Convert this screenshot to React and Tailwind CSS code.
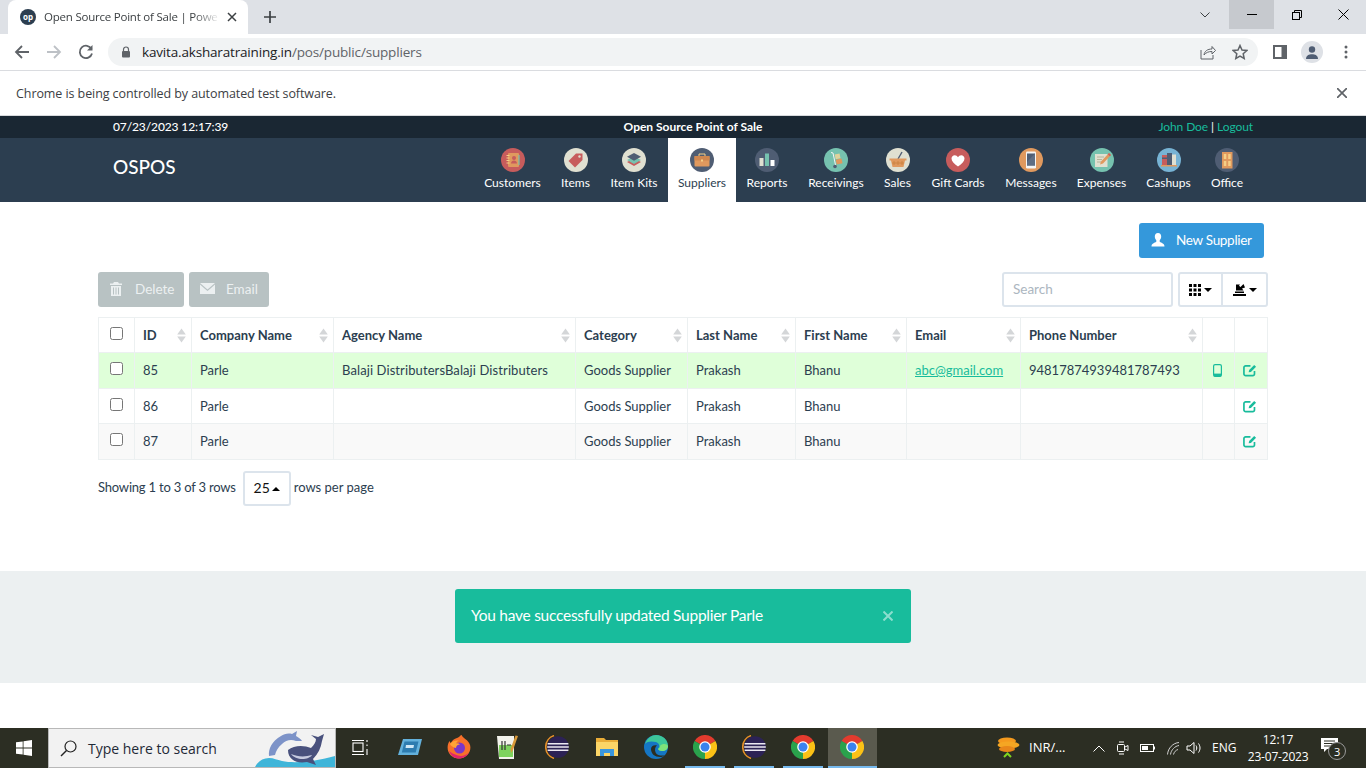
import React from "react";

const Chrome = ({ s = 24 }) => (
  <svg width={s} height={s} viewBox="0 0 24 24">
    <path d="M12 12L1.600 6A12 12 0 0 1 22.400 6Z" fill="#e33b2e" />
    <path d="M12 12L22.400 6A12 12 0 0 1 12 24Z" fill="#fbc116" />
    <path d="M12 12L12 24A12 12 0 0 1 1.600 6Z" fill="#2aa24c" />
    <circle cx="12" cy="12" r="5.800" fill="#fff" />
    <circle cx="12" cy="12" r="4.500" fill="#3b82ee" />
  </svg>
);
const Eclipse = () => (
  <svg width="24" height="24" viewBox="0 0 24 24">
    <path d="M9 0.600A12 12 0 0 0 9 23.400" fill="none" stroke="#e8902a" strokeWidth="1.600" />
    <circle cx="13" cy="12" r="10.800" fill="#2c2255" />
    <path d="M2.600 8.800h20.800M2.200 12h21.600M2.600 15.200h20.800" stroke="#ece9f2" strokeWidth="1.400" />
  </svg>
);
const Firefox = () => (
  <svg width="24" height="24" viewBox="0 0 24 24">
    <path d="M12 23.500C5 23.500 .6 18.500.6 12.500c0-2.400.7-4.600 1.900-6.400.3 1 .8 1.600 1.400 2 1-2.400 3-4 5.400-4.800 2-.7 4-2 5-3.800 1 2.800 3.200 3.500 5.600 5.800 2.300 2.200 3.500 4.600 3.500 7.200 0 6-4.900 11-11.400 11z" fill="#f7702a" />
    <path d="M2 16c2 5 6 7.500 10 7.500 4 0 8-2.500 10-6-3 3-7 4-11 3-4-1-7-3-9-4.500z" fill="#e0226e" />
    <circle cx="12.500" cy="13" r="5.500" fill="#7a35c9" />
    <path d="M3 9c2-3 6-4 9-3.500-1.500.5-2.500 1.500-3 3 1.500-.5 3 0 4 1-2 0-4 1-4 3.500-3-.5-5-2-6-4z" fill="#ffa436" />
  </svg>
);
const Edge = () => (
  <svg width="24" height="24" viewBox="0 0 24 24">
    <circle cx="12" cy="12" r="12" fill="#1576c4" />
    <path d="M1 9C3 3 8 0 12 0c7 0 12 5 12 11 0 3-2.500 5-6 5-2.500 0-4-1-4-2.500 2-1 2-5-2-6.500C8 6 3 6 1 9z" fill="#3dc79a" />
    <path d="M7 14c0 5 4 8 9 8 2 0 3.500-.6 5-1.800-2 .8-8 .8-9.500-3C10.500 15 11 12 13 10.500c-3-1-6 .5-6 3.500z" fill="#2b2e24" />
    <path d="M24 11c0 3-2.500 5-6 5-2 0-3.500-.7-4-2 1.600-.7 2.300-2 2.200-3.500C20 8 23 9 24 11z" fill="#7ee27a" />
  </svg>
);
const TaskIcon = ({ children, underline, active }) => (
  <div className={`w-[49.200px] h-[40px] flex justify-center ${active ? "bg-[#5a5a4e]" : ""}`}>
    <div className={`h-[40px] flex items-center justify-center border-b-[2px] ${active ? "w-full" : "w-[40px]"} ${underline ? "border-[#76b9ed]" : "border-transparent"}`}>
      {children}
    </div>
  </div>
);
const SortCaret = () => (
  <svg width="9" height="15" viewBox="0 0 9 15" className="shrink-0 -mr-[3px]">
    <path d="M4.500 .5L8.800 6.500H.2z" fill="#d4d6d8" />
    <path d="M4.500 14.500L.2 8.500h8.600z" fill="#d4d6d8" />
  </svg>
);
const EditIcon = () => (
  <svg width="15" height="13" viewBox="0 0 15 13" fill="none">
    <path d="M8 1.500H3A1.800 1.800 0 0 0 1 3.300v6.900A1.800 1.800 0 0 0 3 12h7.500a1.800 1.800 0 0 0 1.800-1.800V7" stroke="#18bc9c" strokeWidth="1.800" />
    <path d="M6 8.500l.6-2.500L12 .6 14 2.500 8.500 8z" fill="#18bc9c" />
  </svg>
);
const PhoneIcon = () => (
  <svg width="9" height="13" viewBox="0 0 9 13">
    <rect x=".6" y=".6" width="7.800" height="11.800" rx="1.500" fill="none" stroke="#18bc9c" strokeWidth="1.200" />
    <rect x="1" y="9.600" width="7" height="2.800" fill="#18bc9c" />
  </svg>
);

const navIcons = {
  Customers: (
    <>
      <circle cx="12" cy="12" r="12" fill="#c75c5c" />
      <rect x="7" y="5" width="11" height="14" rx="1" fill="#e0995e" />
      <path d="M5.500 7.500h3M5.500 10h3M5.500 12.500h3M5.500 15h3" stroke="#f5cf87" strokeWidth="1" />
      <circle cx="13" cy="10" r="2" fill="#c75c5c" />
      <path d="M10 15.500c0-2 1.500-3 3-3s3 1 3 3z" fill="#c75c5c" />
      <path d="M18 7v10" stroke="#76c2af" strokeWidth="1.200" />
    </>
  ),
  Items: (
    <>
      <circle cx="12" cy="12" r="12" fill="#e0e0d1" />
      <path d="M12 5.500h6.500V12L11 19.500 4.500 13z" fill="#c75c5c" />
      <circle cx="15.500" cy="8.500" r="1.200" fill="#e0e0d1" />
    </>
  ),
  "Item Kits": (
    <>
      <circle cx="12" cy="12" r="12" fill="#e0e0d1" />
      <path d="M12 10.500l7 3.500-7 4-7-4z" fill="#c75c5c" />
      <path d="M12 8.500l7 3.500-7 4-7-4z" fill="#76c2af" />
      <path d="M12 5l7 3.800-7 4-7-4z" fill="#4f5d73" />
    </>
  ),
  Suppliers: (
    <>
      <circle cx="12" cy="12" r="12" fill="#4f5d73" />
      <rect x="4.500" y="8" width="15" height="10.500" rx="1" fill="#e0995e" />
      <rect x="4.500" y="8" width="15" height="4.500" fill="#d0874f" />
      <path d="M9 8V6h6v2" fill="none" stroke="#f5cf87" strokeWidth="1" />
      <rect x="11" y="11.500" width="2" height="2" fill="#f5cf87" />
    </>
  ),
  Reports: (
    <>
      <circle cx="12" cy="12" r="12" fill="#4f5d73" />
      <rect x="4.500" y="10" width="4" height="8" fill="#e0e0d1" />
      <rect x="10" y="5.500" width="4" height="12.500" fill="#76c2af" />
      <rect x="15.500" y="12" width="4" height="6" fill="#fff" />
    </>
  ),
  Receivings: (
    <>
      <circle cx="12" cy="12" r="12" fill="#76c2af" />
      <path d="M7 4.500l2 .5 2.500 12" fill="none" stroke="#f5f5f5" strokeWidth="1" />
      <rect x="11" y="6" width="5" height="5" transform="rotate(-12 13 8)" fill="#e0d29b" />
      <rect x="12" y="11" width="6" height="5" transform="rotate(-12 15 13)" fill="#e0995e" />
      <circle cx="11" cy="18.500" r="1.800" fill="#4f5d73" />
    </>
  ),
  Sales: (
    <>
      <circle cx="12" cy="12" r="12" fill="#e0e0d1" />
      <path d="M12 11L16 4" stroke="#4f5d73" strokeWidth="1.400" />
      <path d="M3.500 10.500h17v2h-1.500l-1.500 6.500h-11L5 12.500H3.500z" fill="#e0995e" />
      <path d="M8 13v4M12 13v4M16 13v4M6 15h12" stroke="#c9803f" strokeWidth=".8" />
    </>
  ),
  "Gift Cards": (
    <>
      <circle cx="12" cy="12" r="12" fill="#c75c5c" />
      <path d="M12 18.500C8 15.500 5.500 13.500 5.500 10.500c0-2 1.500-3.300 3.200-3.300 1.400 0 2.600.8 3.300 2 .7-1.200 1.900-2 3.300-2 1.700 0 3.200 1.300 3.200 3.300 0 3-2.500 5-6.500 8z" fill="#fff" />
    </>
  ),
  Messages: (
    <>
      <circle cx="12" cy="12" r="12" fill="#e0995e" />
      <rect x="7" y="3.500" width="10" height="17" rx="1.200" fill="#f5f5f5" />
      <rect x="8" y="5.500" width="8" height="12" fill="#4f5d73" />
      <path d="M8 17.500V14l8-8.500v12z" fill="#5f6e84" />
    </>
  ),
  Expenses: (
    <>
      <circle cx="12" cy="12" r="12" fill="#76c2af" />
      <rect x="5" y="6" width="12.500" height="13" fill="#e0e0d1" />
      <path d="M7 9h7M7 11.500h5M7 14h4" stroke="#a9a98f" strokeWidth=".8" />
      <path d="M19 5l2 2-8 8.500-3 1 1-3z" fill="#e0995e" />
      <path d="M19 5l2 2-1.200 1.200-2-2z" fill="#c75c5c" />
    </>
  ),
  Cashups: (
    <>
      <circle cx="12" cy="12" r="12" fill="#77b3d4" />
      <rect x="5" y="7" width="5" height="10" fill="#c75c5c" />
      <rect x="5" y="9.500" width="5" height="1.500" fill="#4f5d73" />
      <rect x="10" y="5" width="5" height="12" fill="#4f5d73" />
      <rect x="15" y="6.500" width="4" height="10.500" fill="#e0e0d1" />
      <rect x="4" y="17" width="16" height="1.500" fill="#e0995e" />
    </>
  ),
  Office: (
    <>
      <circle cx="12" cy="12" r="12" fill="#4f5d73" />
      <rect x="7" y="4" width="10.500" height="16.500" fill="#e0995e" />
      <rect x="8.800" y="6" width="2.500" height="5" fill="#f5cf87" />
      <rect x="13.200" y="6" width="2.500" height="5" fill="#f5cf87" />
      <rect x="8.800" y="13" width="2.500" height="5" fill="#f5cf87" />
      <rect x="13.200" y="13" width="2.500" height="5" fill="#f5cf87" />
    </>
  ),
};

const navItems = [
  ["Customers", "w-[77px]"],
  ["Items", "w-[49px]"],
  ["Item Kits", "w-[68px]"],
  ["Suppliers", "w-[68px]"],
  ["Reports", "w-[62px]"],
  ["Receivings", "w-[76px]"],
  ["Sales", "w-[47px]"],
  ["Gift Cards", "w-[74px]"],
  ["Messages", "w-[72px]"],
  ["Expenses", "w-[69px]"],
  ["Cashups", "w-[65px]"],
  ["Office", "w-[52px]"],
];

const headers = [
  ["ID", "w-[57px]"],
  ["Company Name", "w-[142px]"],
  ["Agency Name", "w-[242px]"],
  ["Category", "w-[112px]"],
  ["Last Name", "w-[108px]"],
  ["First Name", "w-[111px]"],
  ["Email", "w-[114px]"],
  ["Phone Number", "w-[182px]"],
];

const rows = [
  { id: 85, agency: "Balaji DistributersBalaji Distributers", email: "abc@gmail.com", phone: "94817874939481787493", cls: "bg-[#dfffd9] h-[36px]" },
  { id: 86, agency: "", email: "", phone: "", cls: "bg-white h-[35px] [&>td]:pt-[1px]" },
  { id: 87, agency: "", email: "", phone: "", cls: "bg-[#f9f9f9] h-[36px]" },
];

const td = "border border-[#ecf0f1] px-[8px] py-0 text-left font-normal";

export default function App() {
  return (
    <div className="w-[1366px] h-[768px] overflow-hidden flex flex-col bg-white text-[#2c3e50] font-['Lato',sans-serif] text-[13px]">
      {/* Tab strip */}
      <div className="h-[34px] shrink-0 bg-[#dee1e6] flex font-['Open_Sans',sans-serif]">
        <div className="ml-[8px] w-[240px] h-[34px] bg-white rounded-t-[8px] flex items-center pl-[12px] pr-[9px]">
          <div className="w-[16px] h-[16px] rounded-full bg-[#2c3e50] text-white text-[8px] font-bold flex items-center justify-center leading-none shrink-0">op</div>
          <div className="ml-[8px] w-[176px] overflow-hidden whitespace-nowrap text-[11.500px] tracking-[-0.22px] text-[#3c4043] [mask-image:linear-gradient(to_right,black_85%,transparent)]">Open Source Point of Sale | Powe</div>
          <svg width="10" height="10" viewBox="0 0 10 10" className="ml-[7px] shrink-0"><path d="M1 1l8 8M9 1l-8 8" stroke="#3c4043" strokeWidth="1.500" /></svg>
        </div>
        <svg width="12" height="12" viewBox="0 0 12 12" className="ml-[16px] mt-[11px]"><path d="M6 0v12M0 6h12" stroke="#3c4043" strokeWidth="1.700" /></svg>
        <div className="ml-auto flex items-start">
          <div className="w-[48px] h-[29px] flex items-center justify-center">
            <svg width="10" height="6" viewBox="0 0 10 6" fill="none"><path d="M.5.5L5 5 9.500.5" stroke="#3c4043" /></svg>
          </div>
          <div className="w-[45px] h-[29px] bg-[#c6c9ce] flex items-center justify-center">
            <div className="w-[10px] h-px bg-black" />
          </div>
          <div className="w-[46px] h-[29px] flex items-center justify-center">
            <svg width="10" height="10" viewBox="0 0 10 10" fill="none"><rect x=".5" y="2.500" width="7" height="7" stroke="#000" /><path d="M2.500 2.500V.5h7v7h-2" stroke="#000" /></svg>
          </div>
          <div className="w-[46px] h-[29px] flex items-center justify-center">
            <svg width="11" height="11" viewBox="0 0 11 11"><path d="M.5.5l10 10M10.500.5l-10 10" stroke="#000" /></svg>
          </div>
        </div>
      </div>
      {/* Toolbar */}
      <div className="h-[37px] shrink-0 bg-white border-b border-[#dadce0] flex items-center font-['Open_Sans',sans-serif]">
        <div className="w-[108px] flex items-center shrink-0">
          <svg width="16" height="16" viewBox="0 0 16 16" fill="none" className="ml-[14px]"><path d="M15 8H2M8 2L2 8l6 6" stroke="#5f6368" strokeWidth="1.800" /></svg>
          <svg width="16" height="16" viewBox="0 0 16 16" fill="none" className="ml-[16px]"><path d="M1 8h13M8 2l6 6-6 6" stroke="#bdc1c6" strokeWidth="1.800" /></svg>
          <svg width="16" height="16" viewBox="0 0 16 16" fill="none" className="ml-[16px]"><path d="M13.500 5A6.200 6.200 0 1 0 14 9.500" stroke="#5f6368" strokeWidth="1.800" /><path d="M14.500 1v5.500H9z" fill="#5f6368" /></svg>
        </div>
        <div className="w-[1150px] h-[28px] rounded-full bg-[#f1f3f4] flex items-center shrink-0">
          <svg width="10" height="12" viewBox="0 0 10 12" className="ml-[13px]"><path d="M2.500 5V3.500a2.500 2.500 0 0 1 5 0V5" fill="none" stroke="#5f6368" strokeWidth="1.200" /><rect x="1" y="5" width="8" height="6.500" rx="1" fill="#5f6368" /></svg>
          <div className="ml-[11px] text-[13.500px] tracking-[-0.17px] whitespace-nowrap leading-none pt-[1px]">
            <span className="text-[#202124]">kavita.aksharatraining.in</span>
            <span className="text-[#5f6368]">/pos/public/suppliers</span>
          </div>
          <div className="ml-auto flex items-center">
            <svg width="16" height="16" viewBox="0 0 16 16" fill="none"><path d="M1 6v9h12v-4" stroke="#5f6368" /><path d="M4 11c.5-4 3.500-6 8-6V2.500L15.500 6.500 12 10V7.500c-3.500 0-6 1-8 3.500z" stroke="#5f6368" /></svg>
            <svg width="16" height="16" viewBox="0 0 16 16" fill="none" className="ml-[16px] mr-[10px]"><path d="M8 1.500l2 4.500 4.800.5-3.600 3.200 1 4.800L8 12.100l-4.200 2.400 1-4.800L1.200 6.500 6 6z" stroke="#5f6368" strokeWidth="1.500" /></svg>
          </div>
        </div>
        <svg width="14" height="14" viewBox="0 0 14 14" className="ml-[15px]"><path d="M0 0h14v14H0z" fill="#5f6368" /><rect x="2" y="2" width="6.500" height="10" fill="#fff" /></svg>
        <div className="ml-[14px] w-[22px] h-[22px] rounded-full bg-[#dee1e6] overflow-hidden flex items-center justify-center">
          <svg width="14" height="14" viewBox="0 0 14 14"><circle cx="7" cy="4.500" r="3.200" fill="#4f5d73" /><path d="M1 14c0-3.500 3-4.800 6-4.800s6 1.300 6 4.800z" fill="#4f5d73" /></svg>
        </div>
        <svg width="4" height="14" viewBox="0 0 4 14" className="ml-[21px]"><circle cx="2" cy="2" r="1.500" fill="#5f6368" /><circle cx="2" cy="7" r="1.500" fill="#5f6368" /><circle cx="2" cy="12" r="1.500" fill="#5f6368" /></svg>
      </div>
      {/* Infobar */}
      <div className="h-[45px] shrink-0 bg-white border-b border-[#d8dadd] flex items-center justify-between pl-[16px] pr-[19px] font-['Open_Sans',sans-serif] text-[12.500px] text-[#3c4043]">
        <span className="tracking-[-0.08px] pt-[2px]">Chrome is being controlled by automated test software.</span>
        <svg width="10" height="10" viewBox="0 0 10 10"><path d="M0 0l10 10M10 0L0 10" stroke="#5f6368" strokeWidth="1.700" /></svg>
      </div>
      {/* Top bar */}
      <div className="h-[22px] shrink-0 bg-[#1a2733] grid grid-cols-3 items-center px-[113px] text-[12px] text-white">
        <div className="font-medium tracking-[-0.12px]">07/23/2023 12:17:39</div>
        <div className="text-center font-bold whitespace-nowrap pl-[20px]">Open Source Point of Sale</div>
        <div className="text-right text-[#18bc9c] tracking-[-0.08px]">John Doe <span className="text-white">|</span> Logout</div>
      </div>
      {/* Nav */}
      <div className="h-[64px] shrink-0 bg-[#2c3e50] flex pl-[113px] pr-[113px] text-white">
        <div className="text-[19px] font-medium mt-[16px] leading-[26px]">OSPOS</div>
        <div className="ml-auto flex">
          {navItems.map(([n, w]) => (
            <div key={n} className={`${w} flex flex-col items-center pt-[10px] text-[12px] leading-[15px] whitespace-nowrap ${n === "Suppliers" ? "bg-white text-[#2c3e50]" : ""}`}>
              <svg width="24" height="24" viewBox="0 0 24 24">{navIcons[n]}</svg>
              <div className="mt-[3px]">{n}</div>
            </div>
          ))}
        </div>
      </div>
      {/* Main */}
      <div className="flex-1 min-h-0 flex flex-col">
        <div className="h-[369px] shrink-0 px-[98px] pt-[21px]">
          <div className="flex justify-end pr-[4px]">
            <div className="w-[125px] h-[35px] rounded-[3px] bg-[#3498db] text-white flex items-center pl-[12px] text-[13.500px]">
              <svg width="14" height="14" viewBox="0 0 14 14" className="-mt-[2px]"><path d="M7 0C4.800 0 3.800 1.600 3.800 3.500c0 1.800.8 3 1.500 3.800v1.500C3.500 10 0.500 10.500.5 13.500h13c0-3-3-3.500-4.800-4.700V7.300c.7-.8 1.500-2 1.500-3.800C10.200 1.600 9.200 0 7 0z" fill="#fff" /></svg>
              <span className="ml-[11px] tracking-[-0.3px]">New Supplier</span>
            </div>
          </div>
          <div className="flex mt-[14px] h-[35px] text-[13.500px]">
            <div className="w-[86px] rounded-[3px] bg-[#b8c2c3] text-[#ecf0f1] flex items-center pl-[12px]">
              <svg width="12" height="14" viewBox="0 0 12 14" className="-mt-[2px]"><path d="M4 0h4l1 1.500h3V3H0V1.500h3z" fill="#ecf0f1" /><path d="M1 4h10v10H1zM3 5.500v7h1v-7zM5.500 5.500v7h1v-7zM8 5.500v7h1v-7z" fill="#ecf0f1" fillRule="evenodd" /></svg>
              <span className="ml-[13px]">Delete</span>
            </div>
            <div className="ml-[5px] w-[80px] rounded-[3px] bg-[#b8c2c3] text-[#ecf0f1] flex items-center pl-[11px]">
              <svg width="15" height="11" viewBox="0 0 15 11" className="-mt-[2px]"><path d="M0 0h15L7.500 6.500z" fill="#ecf0f1" /><path d="M0 1.500v9.500h15V1.500L10.500 5.500 7.500 8 4.500 5.500z" fill="#ecf0f1" /></svg>
              <span className="ml-[11px]">Email</span>
            </div>
            <div className="ml-auto flex">
              <div className="w-[171px] border-2 border-[#dce4ec] flex items-center pl-[9px] text-[#acb6c0] rounded-[3px]">Search</div>
              <div className="ml-[5px] w-[45px] border-2 border-[#dce4ec] rounded-l-[3px] flex items-center justify-center">
                <svg width="12" height="12" viewBox="0 0 12 12" fill="#000"><path d="M0 0h3v3H0zM4.500 0h3v3h-3zM9 0h3v3H9zM0 4.500h3v3H0zM4.500 4.500h3v3h-3zM9 4.500h3v3H9zM0 9h3v3H0zM4.500 9h3v3h-3zM9 9h3v3H9z" /></svg>
                <svg width="8" height="4" viewBox="0 0 8 4" className="ml-[3px]"><path d="M0 0h8L4 4z" fill="#000" /></svg>
              </div>
              <div className="ml-[-2px] w-[47px] border-2 border-[#dce4ec] rounded-r-[3px] flex items-center justify-center">
                <svg width="13" height="13" viewBox="0 0 13 13" className="-mt-[1px]"><path d="M0 11h13v2H0zM2 8.500h9V10H2z" fill="#000" /><path d="M3 1.500h4L6 2.700 7.500 4 10.500 1 12 4.500 9 5.500 10.500 7.500H3z" fill="#000" /></svg>
                <svg width="8" height="4" viewBox="0 0 8 4" className="ml-[3px]"><path d="M0 0h8L4 4z" fill="#000" /></svg>
              </div>
            </div>
          </div>
          <table className="mt-[10px] w-[1170px] table-fixed border-collapse border border-[#ecf0f1] text-[13px]">
            <thead>
              <tr className="h-[35px]">
                <th className={`${td} w-[36px]`}><input type="checkbox" className="ml-[3px] mb-[4px] block" /></th>
                {headers.map(([h, w]) => (
                  <th key={h} className={`${td} ${w} !font-bold text-[#2c3e50]`}>
                    <div className="flex items-center justify-between">
                      <span className="whitespace-nowrap pt-[2px]">{h}</span>
                      <SortCaret />
                    </div>
                  </th>
                ))}
                <th className={`${td} w-[32px]`} />
                <th className={td} />
              </tr>
            </thead>
            <tbody>
              {rows.map((r) => (
                <tr key={r.id} className={r.cls}>
                  <td className={td}><input type="checkbox" className="ml-[3px] mb-[4px] block" /></td>
                  <td className={td}>{r.id}</td>
                  <td className={td}>Parle</td>
                  <td className={`${td} whitespace-nowrap tracking-[0.1px]`}>{r.agency}</td>
                  <td className={`${td} whitespace-nowrap`}>Goods Supplier</td>
                  <td className={td}>Prakash</td>
                  <td className={td}>Bhanu</td>
                  <td className={td}><span className="text-[#18bc9c] underline">{r.email}</span></td>
                  <td className={`${td} whitespace-nowrap`}>{r.phone}</td>
                  <td className={td}>{r.phone ? <div className="flex justify-center pr-[2px]"><PhoneIcon /></div> : null}</td>
                  <td className={td}><div className="flex justify-center pr-[2px]"><EditIcon /></div></td>
                </tr>
              ))}
            </tbody>
          </table>
          <div className="flex items-center mt-[11px] text-[13px]">
            <span className="tracking-[-0.2px] pb-[2px]">Showing 1 to 3 of 3 rows</span>
            <div className="ml-[7px] w-[48px] h-[35px] border-2 border-[#dce4ec] rounded-[3px] flex items-center justify-center text-[#111] text-[14px]">
              <span className="pb-[2px]">25</span>
              <svg width="8" height="4" viewBox="0 0 8 4" className="ml-[2px]"><path d="M0 4h8L4 0z" fill="#000" /></svg>
            </div>
            <span className="ml-[3px] pb-[2px]">rows per page</span>
          </div>
        </div>
        <div className="h-[112px] shrink-0 bg-[#ecf0f1] pt-[18px] flex justify-center">
          <div className="w-[456px] h-[54px] rounded-[3px] bg-[#18bc9c] text-white flex items-center justify-between pl-[16px] pr-[18px] text-[15.500px]">
            <span className="tracking-[-0.26px]">You have successfully updated Supplier Parle</span>
            <svg width="10" height="10" viewBox="0 0 10 10"><path d="M.5.5l9 9M9.500.5l-9 9" stroke="#8cdece" strokeWidth="2" /></svg>
          </div>
        </div>
      </div>
      {/* Taskbar */}
      <div className="h-[40px] mt-[45px] shrink-0 bg-[#2c2e23] flex items-center text-white font-['Open_Sans',sans-serif]">
        <div className="w-[48px] flex justify-center shrink-0">
          <svg width="16" height="16" viewBox="0 0 16 16" fill="#fff"><path d="M0 2.300l6.700-.9v6.200H0zM7.500 1.300L16 0v7.600H7.500zM0 8.400h6.700v6.200L0 13.700zM7.500 8.400H16V16l-8.500-1.200z" /></svg>
        </div>
        <div className="w-[288px] h-[40px] bg-[#f2f2f2] border border-[#b8b8b8] flex items-center pl-[11px] overflow-hidden shrink-0 text-[#1f2a37]">
          <svg width="17" height="17" viewBox="0 0 17 17" fill="none"><circle cx="10.500" cy="6.500" r="5.500" stroke="#222" strokeWidth="1.200" /><path d="M6.500 10.500L1 16" stroke="#222" strokeWidth="1.400" /></svg>
          <span className="ml-[11px] text-[14px] whitespace-nowrap">Type here to search</span>
          <svg width="80" height="38" viewBox="0 0 80 38" className="ml-auto shrink-0">
            <path d="M0 38c3-6 8-9 14-9 5 0 8 2 13 3 14 3 35 0 53-5v11z" fill="#3fb5d9" />
            <path d="M14 27c-1-7 3-15 12-20 3-2 7-3 11-2l5-3-1 5c2 1 5 3 6 5l-6 0c-5-2-10-1-14 3-4 3-6 7-7 11z" fill="#7d93c8" />
            <path d="M33 21c6-5 16-5 23-2 3-3 5-6 5-9l-5-4 7 2 6-3-2 7c-1 7-4 13-9 18l3 6-9-3c-10 2-19-2-19-12z" fill="#49517d" />
            <path d="M36 25c7 3 14 3 21 1-3 5-16 6-21-1z" fill="#c7cbe0" />
          </svg>
        </div>
        <div className="flex shrink-0">
          <TaskIcon>
            <svg width="17" height="17" viewBox="0 0 17 17" fill="none" stroke="#fff" strokeWidth="1.100"><rect x="1" y="4" width="10" height="8.500" /><path d="M0 1.500h12M0 15.500h12M15 1v2M15 5.500v1.500M15 10v6" /></svg>
          </TaskIcon>
          <TaskIcon>
            <svg width="24" height="18" viewBox="0 0 24 18"><path d="M5 1h19l-4 16H0z" fill="#63b1dc" /><path d="M6.500 3.500h14l-2.800 11H3.800z" fill="#2d7cb0" /><path d="M8 7h8l-.6 3H7.500z" fill="#cfe8f7" /></svg>
          </TaskIcon>
          <TaskIcon><Firefox /></TaskIcon>
          <TaskIcon>
            <svg width="22" height="24" viewBox="0 0 22 24"><path d="M0 1h17v23H2z" fill="#f3f3ec" /><rect x="2" y="10" width="14" height="12" fill="#7ed35e" /><path d="M5 6v9M8 6v9M10 10h4" stroke="#333" strokeWidth="1.200" /><path d="M21 1l-5 14-2 3-.5-4L18.500 .5z" fill="#d99a3a" /></svg>
          </TaskIcon>
          <TaskIcon><Eclipse /></TaskIcon>
          <TaskIcon>
            <svg width="22" height="18" viewBox="0 0 22 18"><path d="M0 0h8l2 2h12v16H0z" fill="#e9ad38" /><path d="M0 4h22v14H0z" fill="#fbd567" /><path d="M4 18v-7h14v7h-4v-3H8v3z" fill="#3a96dd" /></svg>
          </TaskIcon>
          <TaskIcon><Edge /></TaskIcon>
          <TaskIcon underline><Chrome /></TaskIcon>
          <TaskIcon underline><Eclipse /></TaskIcon>
          <TaskIcon underline><Chrome /></TaskIcon>
          <TaskIcon underline active><Chrome /></TaskIcon>
        </div>
        <div className="ml-[119px] flex items-center h-full text-[13px] shrink-0">
          <svg width="24" height="22" viewBox="0 0 24 22"><ellipse cx="11" cy="4" rx="9" ry="3.500" fill="#f59a1e" /><ellipse cx="12.500" cy="8" rx="11" ry="3.500" fill="#f5a623" /><ellipse cx="11" cy="12" rx="8" ry="3" fill="#e8861a" /><path d="M8 20l3.500-3.500L15 20" fill="none" stroke="#7ed321" strokeWidth="2" /></svg>
          <span className="ml-[9px] w-[56px] whitespace-nowrap">INR/...</span>
          <svg width="12" height="7" viewBox="0 0 12 7" fill="none" stroke="#fff" className="ml-[8px]"><path d="M.5 6.500L6 1l5.500 5.500" /></svg>
          <svg width="12" height="16" viewBox="0 0 12 16" fill="none" stroke="#fff" className="ml-[12px]"><rect x=".5" y="4.500" width="7" height="7" rx="1" /><path d="M8 7l3-1.500v5L8 9M2 2h5M2 14h5" /></svg>
          <svg width="15" height="8" viewBox="0 0 15 8" className="ml-[11px]"><rect x=".5" y=".5" width="13" height="7" fill="none" stroke="#fff" /><rect x="2" y="2" width="6" height="4" fill="#fff" /><rect x="14" y="2.500" width="1" height="3" fill="#fff" /></svg>
          <svg width="13" height="13" viewBox="0 0 13 13" fill="none" stroke="#cfcfcf" className="ml-[12px]"><path d="M.5 12.500C1 6 6 1 12 .5M3.500 12.500C4 8 8 4 12 3.500M6.500 12.500C7 10 9 8 11 7.500" /></svg>
          <svg width="15" height="14" viewBox="0 0 15 14" fill="none" stroke="#fff" className="ml-[6px]"><path d="M1 5h3l4-3.500v11L4 9H1zM10 4.500c1 1.500 1 3.500 0 5M12.500 2.500c2 3 2 6 0 9" /></svg>
          <span className="ml-[11px] text-[12px] w-[30px]">ENG</span>
        </div>
        <div className="ml-[4px] w-[64px] text-[12px] leading-[17px] text-center whitespace-nowrap shrink-0">
          <div>12:17</div>
          <div className="tracking-[-0.2px]">23-07-2023</div>
        </div>
        <div className="ml-[11px] w-[26px] h-[30px] shrink-0 relative">
          <svg width="17" height="15" viewBox="0 0 17 15" className="mt-[5px]"><path d="M0 0h17v11H6l-3 3v-3H0z" fill="#fff" /><path d="M3 3h11M3 5.500h11M3 8h11" stroke="#2c2e23" /></svg>
          <div className="absolute left-[7px] top-[9px] w-[18px] h-[18px] rounded-full bg-[#2c2e23] border border-[#9a9a9a] text-[11px] flex items-center justify-center leading-none">3</div>
        </div>
      </div>
    </div>
  );
}
